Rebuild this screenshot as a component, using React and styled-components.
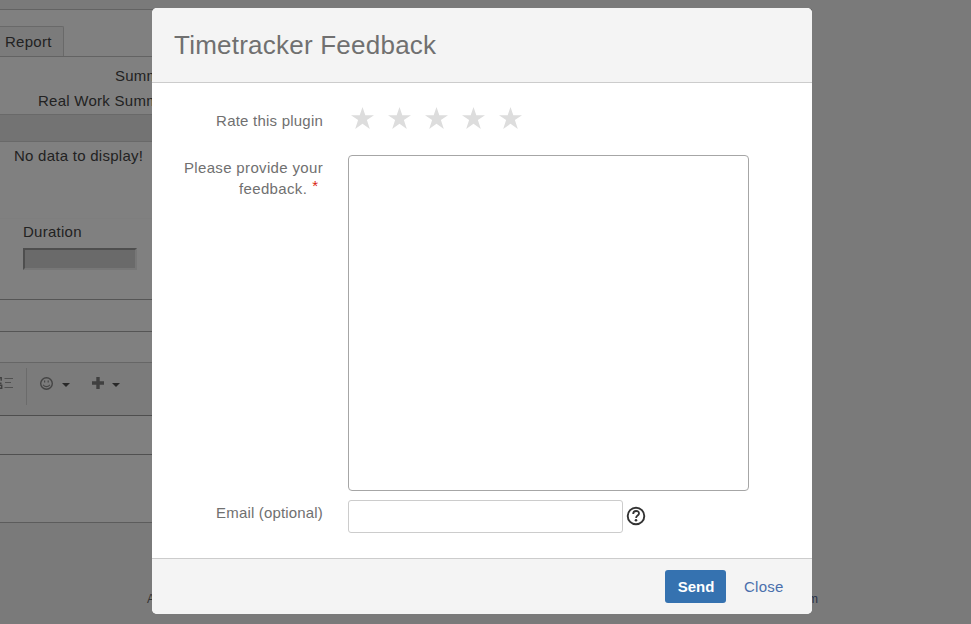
import React from "react";
import styled, { createGlobalStyle } from "styled-components";

const GlobalStyle = createGlobalStyle`
  * { box-sizing: border-box; }
  body {
    margin: 0;
    overflow: hidden;
    background: #7a7a7a;
    font: 15px/20px "Liberation Sans", Arial, sans-serif;
    letter-spacing: 0.26px;
    color: #222;
  }
`;

const Screen = styled.div`
  position: relative;
  height: 624px;
  overflow: hidden;
`;

const Page = styled.main`
  width: 812px;
  display: flex;
  flex-direction: column;
`;

const Strip = styled.section`
  height: ${(p) => p.$h}px;
  flex: none;
  border-top: 1px solid ${(p) => p.$line || "transparent"};
  background: ${(p) => p.$bg || "#808080"};
`;

const TopBar = styled.div`
  height: 9px;
`;

const TabStrip = styled(Strip)`
  display: flex;
  align-items: flex-end;
`;

const Tab = styled.div`
  width: 64px;
  height: 30px;
  padding: 5px 0 0 5px;
  border: solid #696969;
  border-width: 1px 1px 0 0;
  border-top-right-radius: 2px;
  background: #7b7b7b;
`;

const Totals = styled(Strip)`
  padding-top: 8px;
`;

const Total = styled.div`
  height: 25px;
  line-height: 22px;
  padding-left: ${(p) => p.$indent}px;
`;

const Empty = styled(Strip)`
  padding: 4px 0 0 14px;
`;

const DurationField = styled(Strip)`
  padding: 3px 0 0 23px;
`;

const DurationInput = styled.div`
  width: 114px;
  height: 22px;
  margin-top: 6px;
  border: 2px solid;
  border-color: #4e4e4e #777 #777 #4e4e4e;
  background: #6a6a6a;
`;

const Toolbar = styled(Strip)`
  display: flex;
  align-items: flex-start;
  padding-top: 5px;
`;

const Separator = styled.div`
  width: 1px;
  height: 37px;
  margin: 0 12px 0 13px;
  background: #6b6b6b;
`;

const Icon = styled.svg`
  display: block;
  flex: none;
  margin-top: ${(p) => p.$top || 0}px;
  margin-left: ${(p) => p.$left || 0}px;
`;

const Footer = styled.footer`
  width: 971px;
  padding: 66px 0 0 147px;
  display: flex;
  font-size: 12px;
  letter-spacing: 0;
  color: #333;
`;

const FooterEnd = styled.span`
  margin-left: 653px;
  color: #293146;
`;

const Dialog = styled.form`
  position: absolute;
  left: 152px;
  top: 8px;
  width: 660px;
  height: 606px;
  display: flex;
  flex-direction: column;
  overflow: hidden;
  border-radius: 5px;
  background: #fff;
  color: #707070;
`;

const DialogHeader = styled.header`
  height: 75px;
  padding: 21px 22px;
  border-bottom: 1px solid #ccc;
  background: #f4f4f4;
`;

const Title = styled.h1`
  margin: 0;
  font-size: 26px;
  line-height: 32px;
  font-weight: 400;
  letter-spacing: 0.23px;
`;

const DialogBody = styled.div`
  flex: 1;
  display: grid;
  grid-template-columns: 171px 1fr;
  grid-template-rows: 72px 345px 1fr;
  column-gap: 25px;
`;

const Label = styled.label`
  padding-top: ${(p) => p.$top}px;
  line-height: 21px;
  text-align: right;
  letter-spacing: ${(p) => p.$spacing}px;
`;

const RequiredLine = styled.span`
  display: flex;
  justify-content: flex-end;
  gap: 5px;
  padding-right: 5px;
`;

const Required = styled.span`
  height: 16px;
  margin-top: -3px;
  color: #d91f11;
  font-size: 15px;
  letter-spacing: 0;
`;

const Stars = styled.div`
  display: flex;
  gap: 14px;
  padding: 24px 0 0 2.5px;
`;

const Feedback = styled.textarea`
  width: 401px;
  height: 336px;
  border: 1px solid #a6a6a6;
  border-radius: 4px;
  background: #fff;
  resize: none;
  outline: none;
`;

const EmailRow = styled.div`
  display: flex;
  align-items: flex-start;
`;

const EmailInput = styled.input`
  width: 275px;
  height: 33px;
  border: 1px solid #ccc;
  border-radius: 3px;
  outline: none;
`;

const DialogFooter = styled.footer`
  height: 56px;
  flex: none;
  display: flex;
  align-items: flex-start;
  gap: 18px;
  padding: 11px 0 0 513px;
  border-top: 1px solid #ccc;
  background: #f4f4f4;
`;

const SendButton = styled.button`
  width: 61px;
  height: 33px;
  padding: 0 0 0 1px;
  border: 0;
  border-radius: 3px;
  background: #3572b0;
  color: #fff;
  font: 700 15px/33px "Liberation Sans", Arial, sans-serif;
  letter-spacing: 0;
`;

const CloseLink = styled.a`
  line-height: 33px;
  color: #4a6fac;
`;

const Caret = ({ left }) => (
  <Icon width="8" height="4" viewBox="0 0 8 4" $top={15} $left={left}>
    <path d="M0 0h8L4 4z" fill="#292929" />
  </Icon>
);

const Star = () => (
  <svg width="23" height="22" viewBox="0 0 22 22" preserveAspectRatio="none">
    <path d="M11 0l2.7 8.2H22l-6.8 4.9L18 22l-7-5.2L4 22l2.8-8.9L0 8.2h8.3z" fill="#ddd" />
  </svg>
);

export default function App() {
  return (
    <Screen>
      <GlobalStyle />
      <Page>
        <TopBar />
        <TabStrip $h={47} $line="#636363">
          <Tab>Report</Tab>
        </TabStrip>
        <Totals $h={58} $line="#636363">
          <Total $indent={115}>Summary:</Total>
          <Total $indent={38}>Real Work Summary:</Total>
        </Totals>
        <Strip $h={27} $line="#696969" $bg="#737373" />
        <Empty $h={77} $line="#696969">No data to display!</Empty>
        <DurationField $h={81} $line="#7e7e7e">
          Duration
          <DurationInput />
        </DurationField>
        <Strip $h={32} $line="#555" />
        <Strip $h={31} $line="#555" />
        <Toolbar $h={53} $line="#666" $bg="#7b7b7b">
          <Icon width="13" height="12" viewBox="0 0 13 12" $top={9}>
            <path d="M4.5 1.5H13M5 5.5h6M4.5 10.5H13" stroke="#505050" strokeWidth="1.2" />
            <path d="M0 .7h1.2v3M0 6.3h1.5M0 8.3h1.7v3H0" stroke="#404040" strokeWidth="1.4" fill="none" />
          </Icon>
          <Separator />
          <Icon width="14" height="14" viewBox="0 0 14 14" $top={9}>
            <circle cx="7.5" cy="6.5" r="5.8" stroke="#444" strokeWidth="1.4" fill="none" />
            <path d="M4 7.8q3.5 3.5 7 0" stroke="#484848" strokeWidth="1.1" fill="none" />
            <path d="M5.6 3.5v2M9.2 3.5v2" stroke="#484848" strokeWidth="1.2" />
          </Icon>
          <Caret left={9} />
          <Icon width="12" height="12" viewBox="0 0 12 12" $top={9} $left={22}>
            <path d="M6 0v12M0 6h12" stroke="#404040" strokeWidth="3.4" />
          </Icon>
          <Caret left={8} />
        </Toolbar>
        <Strip $h={39} $line="#4e4e4e" />
        <Strip $h={68} $line="#505050" />
        <Strip $h={1} $line="#5c5c5c" />
        <Footer>
          <span>A</span>
          <FooterEnd>m</FooterEnd>
        </Footer>
      </Page>
      <Dialog>
        <DialogHeader>
          <Title>Timetracker Feedback</Title>
        </DialogHeader>
        <DialogBody>
          <Label $top={27} $spacing={0.22}>Rate this plugin</Label>
          <Stars>
            {[1, 2, 3, 4, 5].map((n) => (
              <Star key={n} />
            ))}
          </Stars>
          <Label $top={2} $spacing={0.34}>
            Please provide your
            <RequiredLine>
              feedback. <Required>*</Required>
            </RequiredLine>
          </Label>
          <Feedback />
          <Label $top={2} $spacing={0.17}>Email (optional)</Label>
          <EmailRow>
            <EmailInput />
            <Icon width="20" height="20" viewBox="0 0 20 20" $top={6} $left={3}>
              <circle cx="10" cy="10" r="8.3" stroke="#333" strokeWidth="1.9" fill="none" />
              <path
                d="M7.2 8q0-3 2.9-3t2.9 2.5c0 2-2.9 2.1-2.9 4.4"
                stroke="#333"
                strokeWidth="1.8"
                fill="none"
              />
              <circle cx="10" cy="14.3" r="1.3" fill="#333" />
            </Icon>
          </EmailRow>
        </DialogBody>
        <DialogFooter>
          <SendButton type="button">Send</SendButton>
          <CloseLink>Close</CloseLink>
        </DialogFooter>
      </Dialog>
    </Screen>
  );
}
